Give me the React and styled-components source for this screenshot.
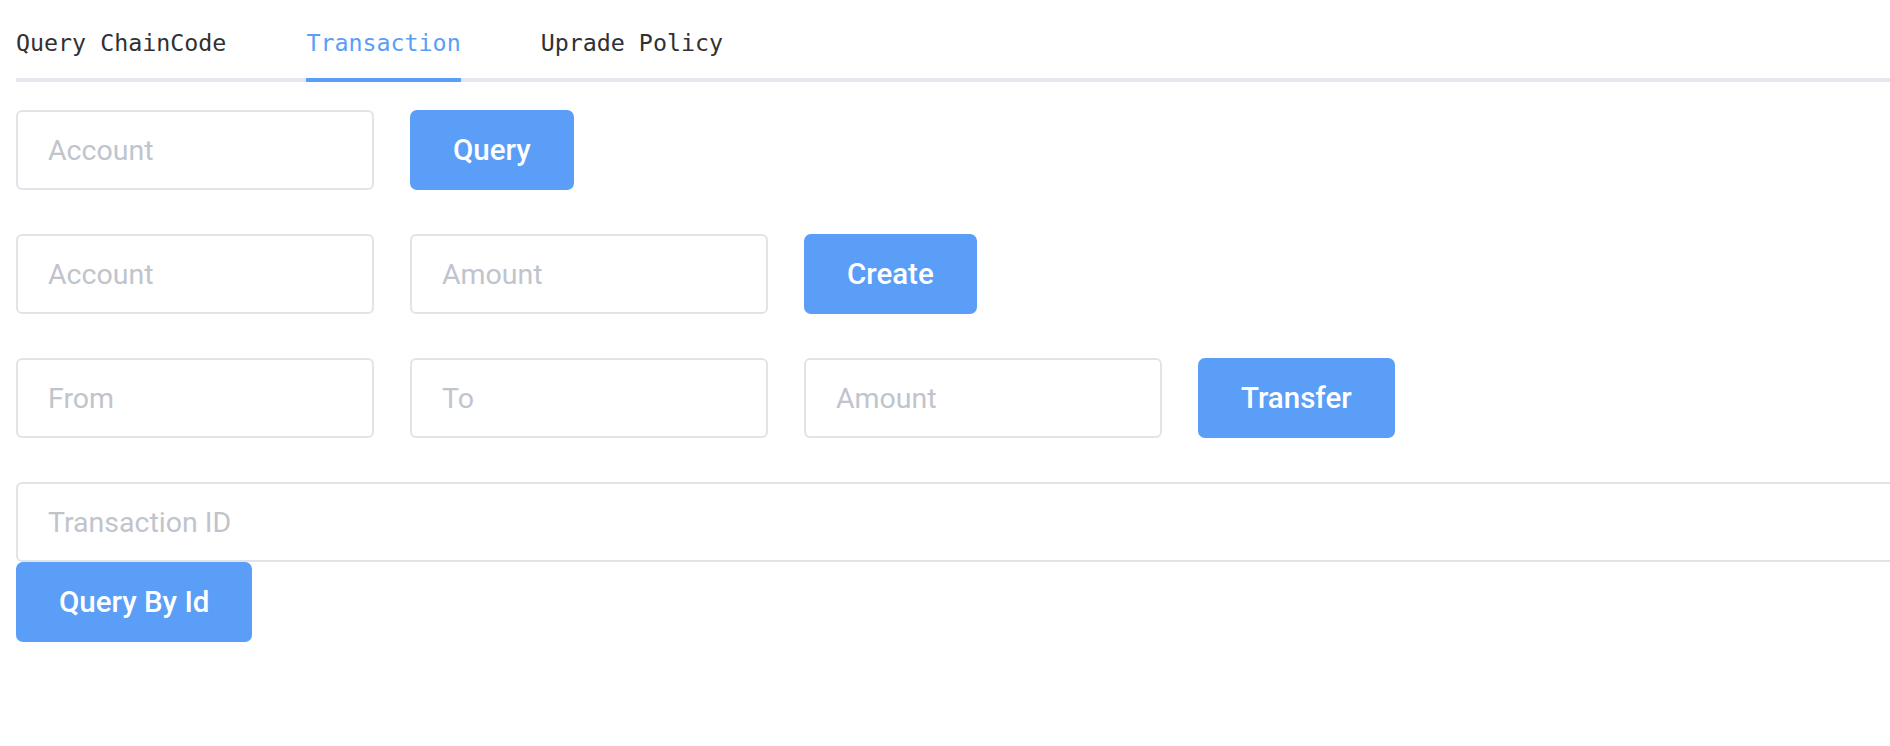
import React, { useState } from "react";
import styled, { createGlobalStyle } from "styled-components";

const GlobalStyle = createGlobalStyle`
  html, body {
    margin: 0;
    padding: 0;
    background: #ffffff;
    overflow: hidden;
  }
  body {
    font-family: "Liberation Sans", Arial, sans-serif;
  }
`;

const tabs = ["Query ChainCode", "Transaction", "Uprade Policy"];

function App() {
  const [active, setActive] = useState(1);

  return (
    <Page>
      <GlobalStyle />
      <TabList>
        {tabs.map((t, i) => (
          <Tab key={t} $active={i === active} onClick={() => setActive(i)}>
            {t}
          </Tab>
        ))}
      </TabList>

      <Form>
        <Row>
          <Input placeholder="Account" />
          <Button>Query</Button>
        </Row>
        <Row>
          <Input placeholder="Account" />
          <Input placeholder="Amount" />
          <Button>Create</Button>
        </Row>
        <Row>
          <Input placeholder="From" />
          <Input placeholder="To" />
          <Input placeholder="Amount" />
          <Button>Transfer</Button>
        </Row>
        <Stack>
          <Input $wide placeholder="Transaction ID" />
          <Button>Query By Id</Button>
        </Stack>
      </Form>
    </Page>
  );
}

const Page = styled.div`
  width: 1900px;
  padding: 8px 0 0 16px;
`;

const TabList = styled.div`
  display: flex;
  gap: 80px;
  border-bottom: 4px solid #e4e7ed;
`;

const Tab = styled.div`
  height: 70px;
  line-height: 70px;
  margin-bottom: -4px;
  border-bottom: 4px solid ${(p) => (p.$active ? "#5a9ef8" : "transparent")};
  font-family: "DejaVu Sans Mono", "Liberation Mono", monospace;
  font-size: 23.3px;
  color: ${(p) => (p.$active ? "#5a9ef8" : "#303133")};
  cursor: pointer;
`;

const Form = styled.div`
  display: flex;
  flex-direction: column;
  gap: 44px;
  padding-top: 28px;
`;

const Row = styled.div`
  display: flex;
  gap: 36px;
`;

const Stack = styled.div`
  display: flex;
  flex-direction: column;
  align-items: flex-start;
`;

const Input = styled.input`
  box-sizing: border-box;
  width: ${(p) => (p.$wide ? "1900px" : "358px")};
  height: 80px;
  padding: 0 30px;
  border: 2px solid #e1e3e9;
  border-radius: 6px;
  font-family: Roboto, "Liberation Sans", Arial, sans-serif;
  font-size: 28.5px;
  color: #606266;
  outline: none;
  &::placeholder {
    color: #c0c4cc;
  }
`;

const Button = styled.button`
  box-sizing: border-box;
  height: 80px;
  padding: 0 43px;
  border: none;
  border-radius: 7px;
  background: #5a9ef8;
  color: #ffffff;
  font-family: Roboto, "Liberation Sans", Arial, sans-serif;
  font-size: 29.5px;
  font-weight: 500;
  cursor: pointer;
`;

export default App;
